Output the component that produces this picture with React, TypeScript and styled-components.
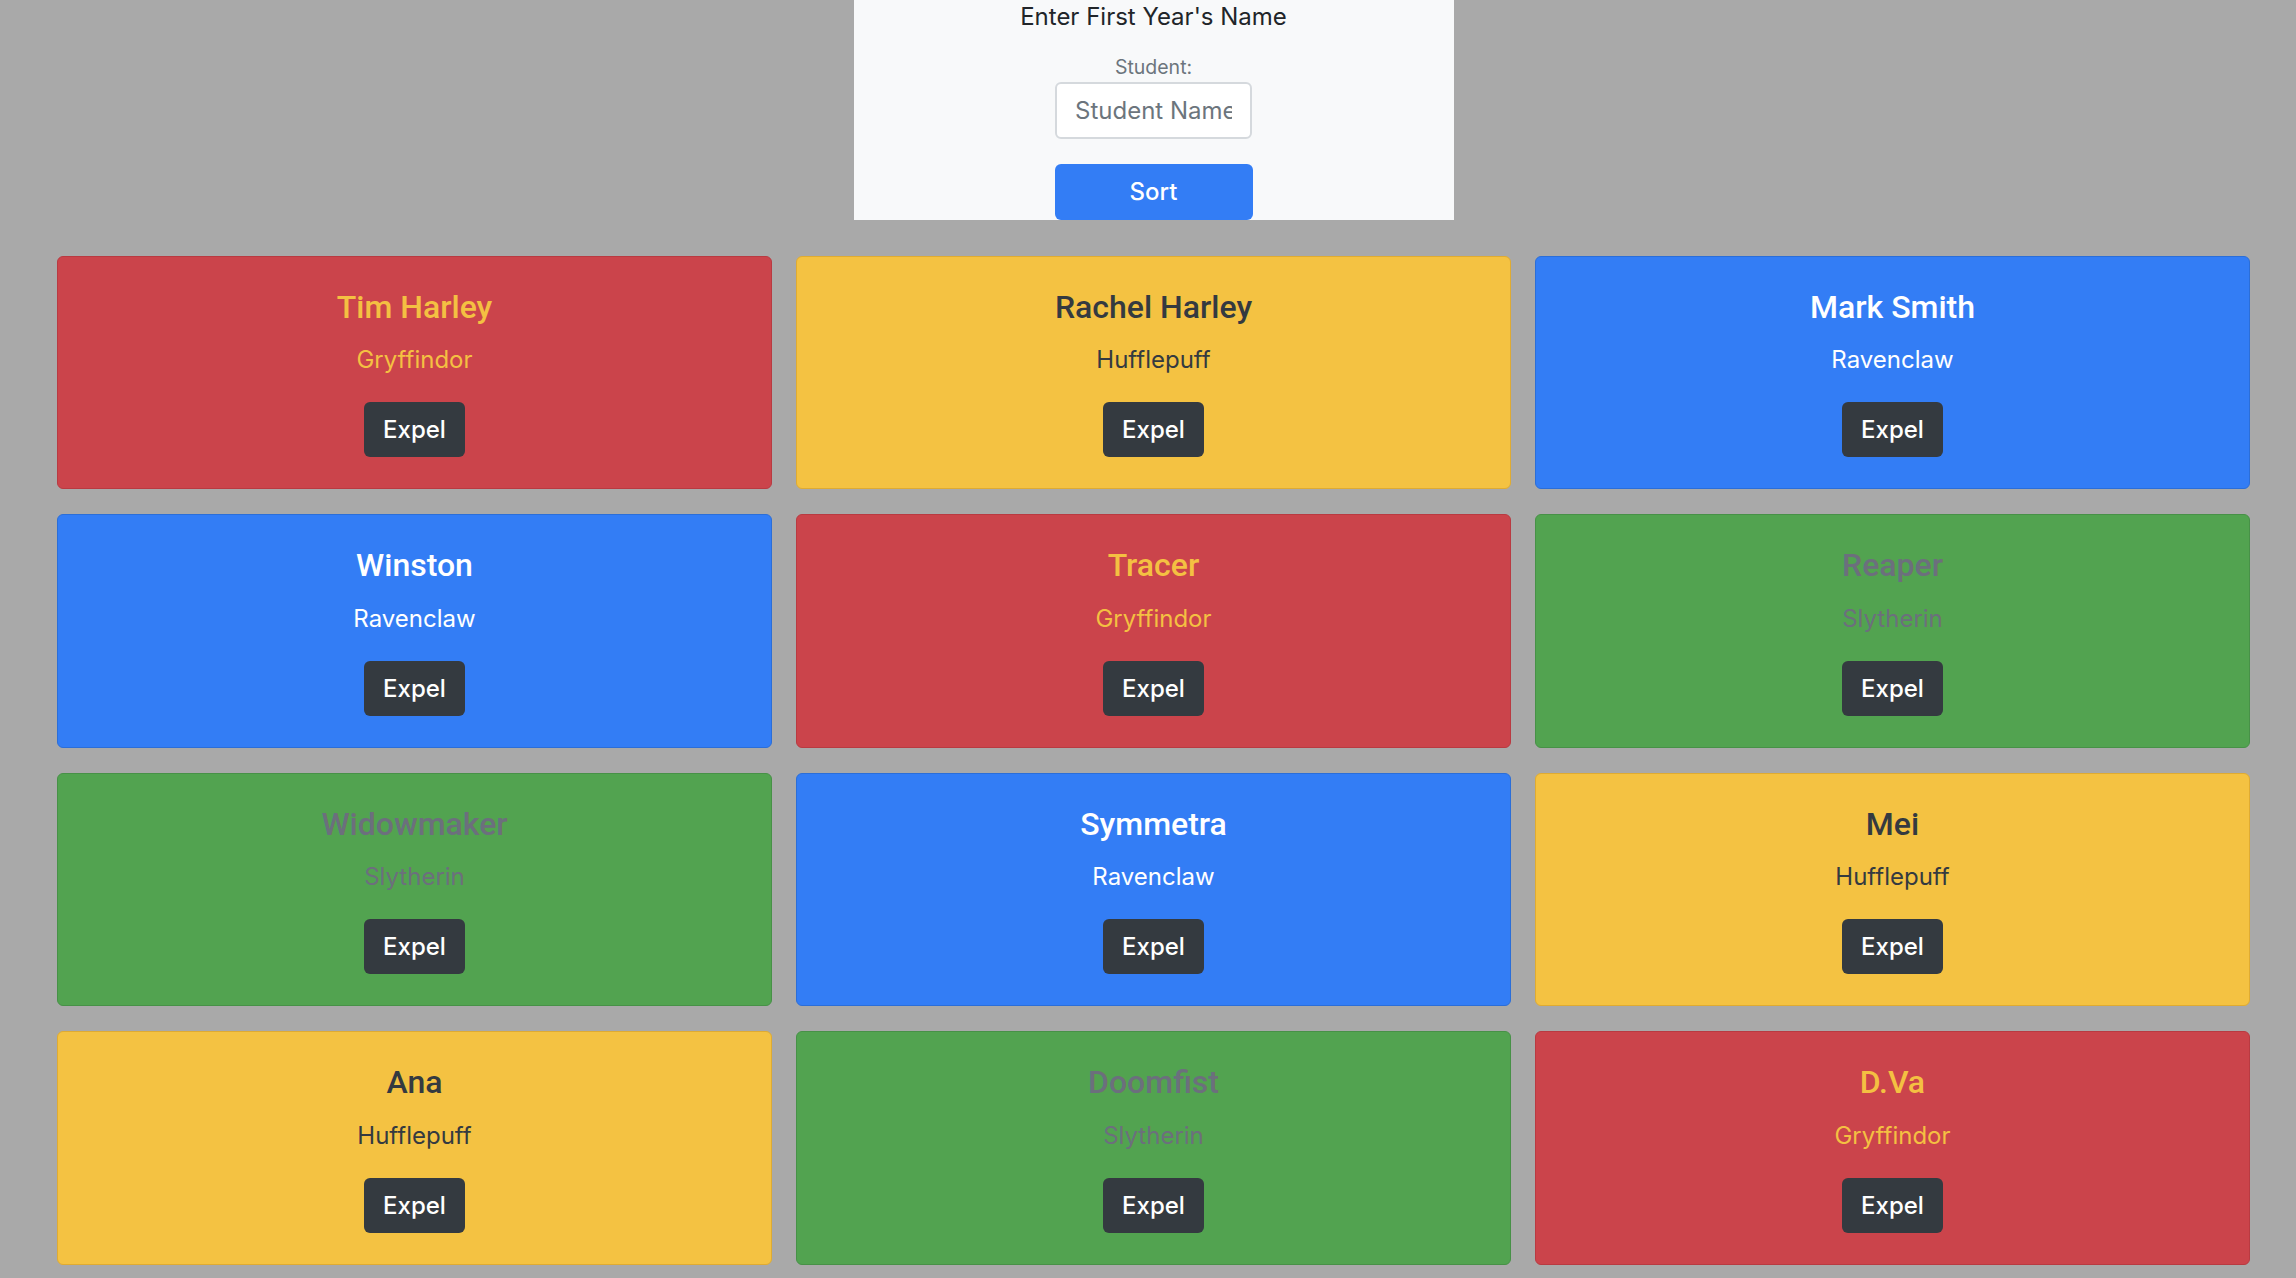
import React from "react";
import styled, { createGlobalStyle } from "styled-components";

type House = "Gryffindor" | "Hufflepuff" | "Ravenclaw" | "Slytherin";

const houseStyles: Record<House, { bg: string; border: string; text: string }> = {
  Gryffindor: { bg: "#cb444b", border: "#b93a41", text: "#f4c042" },
  Hufflepuff: { bg: "#f4c242", border: "#dfab32", text: "#343a40" },
  Ravenclaw: { bg: "#337df5", border: "#2b6ed8", text: "#ffffff" },
  Slytherin: { bg: "#52a350", border: "#479147", text: "#6c6f7d" },
};

const students: { name: string; house: House }[] = [
  { name: "Tim Harley", house: "Gryffindor" },
  { name: "Rachel Harley", house: "Hufflepuff" },
  { name: "Mark Smith", house: "Ravenclaw" },
  { name: "Winston", house: "Ravenclaw" },
  { name: "Tracer", house: "Gryffindor" },
  { name: "Reaper", house: "Slytherin" },
  { name: "Widowmaker", house: "Slytherin" },
  { name: "Symmetra", house: "Ravenclaw" },
  { name: "Mei", house: "Hufflepuff" },
  { name: "Ana", house: "Hufflepuff" },
  { name: "Doomfist", house: "Slytherin" },
  { name: "D.Va", house: "Gryffindor" },
];

const GlobalStyle = createGlobalStyle`
  html, body {
    margin: 0;
    padding: 0;
    background: #a9a9a9;
    font-family: Inter, "Noto Sans", "Liberation Sans", sans-serif;
    color: #212529;
  }
  * { box-sizing: border-box; }
`;

const Page = styled.div`
  padding: 0 46px 40px 57px;
  display: flex;
  flex-direction: column;
  align-items: center;
`;

const FormPanel = styled.form`
  width: 600px;
  height: 220px;
  background: #f8f9fa;
  display: flex;
  flex-direction: column;
  align-items: center;
  padding-top: 3px;
`;

const Heading = styled.h1`
  margin: 0;
  font-size: 24px;
  font-weight: 400;
  line-height: 1.2;
  color: #212529;
`;

const Label = styled.label`
  margin-top: 20px;
  font-size: 19.5px;
  line-height: 30px;
  color: #6c757d;
`;

const NameInput = styled.input`
  width: 197px;
  height: 57px;
  padding: 0 18px;
  border: 2px solid #d5d9dd;
  border-radius: 6px;
  background: #fff;
  font-family: inherit;
  font-size: 24px;
  color: #495057;
  outline: none;
  &::placeholder {
    color: #6c757d;
  }
`;

const SortButton = styled.button`
  margin-top: 25px;
  width: 198px;
  height: 56px;
  border: none;
  border-radius: 6px;
  background: #337df5;
  color: #fff;
  font-family: inherit;
  font-size: 24px;
  font-weight: 500;
  cursor: pointer;
`;

const Grid = styled.div`
  margin-top: 36px;
  width: 100%;
  display: grid;
  grid-template-columns: repeat(3, 1fr);
  column-gap: 24px;
  row-gap: 25px;
`;

const Card = styled.div<{ $house: House }>`
  background: ${(p) => houseStyles[p.$house].bg};
  border: 1px solid ${(p) => houseStyles[p.$house].border};
  border-radius: 6px;
  padding: 31px 30px 31px;
  display: flex;
  flex-direction: column;
  align-items: center;
  text-align: center;
  color: ${(p) => houseStyles[p.$house].text};
`;

const Name = styled.h5`
  margin: 0 0 16px;
  font-family: Roboto, "Liberation Sans", sans-serif;
  font-size: 32px;
  font-weight: 500;
  line-height: 1.2;
`;

const HouseName = styled.p`
  margin: 0 0 24px;
  font-size: 24px;
  line-height: 1.5;
`;

const ExpelButton = styled.button`
  height: 55px;
  padding: 0 19px;
  border: none;
  border-radius: 6px;
  background: #343a40;
  color: #fff;
  font-family: inherit;
  font-size: 24px;
  font-weight: 500;
  cursor: pointer;
`;

export default function App() {
  return (
    <>
      <GlobalStyle />
      <Page>
        <FormPanel onSubmit={(e) => e.preventDefault()}>
          <Heading>Enter First Year's Name</Heading>
          <Label htmlFor="student">Student:</Label>
          <NameInput id="student" placeholder="Student Name" />
          <SortButton type="submit">Sort</SortButton>
        </FormPanel>
        <Grid>
          {students.map((s) => (
            <Card key={s.name} $house={s.house}>
              <Name>{s.name}</Name>
              <HouseName>{s.house}</HouseName>
              <ExpelButton>Expel</ExpelButton>
            </Card>
          ))}
        </Grid>
      </Page>
    </>
  );
}
